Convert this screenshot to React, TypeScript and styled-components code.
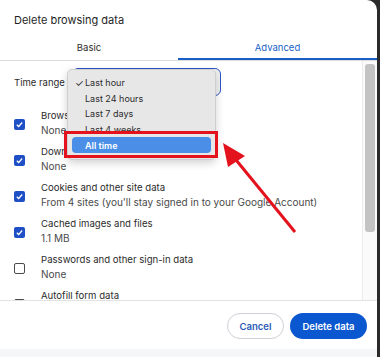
import React from 'react'
import styled, { createGlobalStyle } from 'styled-components'

const GlobalStyle = createGlobalStyle`
  html, body {
    margin: 0;
    padding: 0;
    background: #2a2a2a;
    font-family: Inter, "Noto Sans", sans-serif;
  }
`

const Page = styled.div`
  width: 380px;
  height: 357px;
  overflow: hidden;
  position: relative;
`

const Dialog = styled.div`
  width: 377px;
  height: 357px;
  background: #fff;
  border-top-right-radius: 10px;
  display: flex;
  flex-direction: column;
`

const Title = styled.div`
  padding: 12px 14px 0;
  height: 24px;
  font-size: 11px;
  color: #1f1f1f;
  line-height: 16px;
`

const Tabs = styled.div`
  display: flex;
  height: 24px;
  border-bottom: 1px solid #dcdcdc;
`

const Tab = styled.div<{ $active?: boolean; $width?: number }>`
  ${(p) => (p.$width ? `width: ${p.$width}px;` : 'flex: 1;')}
  display: flex;
  align-items: center;
  justify-content: center;
  padding-bottom: 2px;
  font-size: 9.5px;
  color: ${(p) => (p.$active ? '#1a5fc8' : '#2b2b2b')};
  box-shadow: ${(p) => (p.$active ? 'inset 0 -2px 0 #1a5fc8' : 'none')};
`

const Body = styled.div`
  height: 239px;
  display: flex;
  overflow: hidden;
`

const Content = styled.div`
  flex: 1;
  padding: 7px 14px 0;
  display: flex;
  flex-direction: column;
`

const RangeRow = styled.div`
  display: flex;
  align-items: center;
  height: 28px;
  margin-bottom: 12px;
`

const Label = styled.span`
  font-size: 9.5px;
  color: #2b2b2b;
  width: 58px;
`

const SelectBox = styled.div`
  width: 147px;
  height: 26px;
  border: 1.5px solid #2f55c8;
  border-radius: 6px;
  background: #f1f1f1;
`

const Rows = styled.div`
  display: flex;
  flex-direction: column;
  gap: 6px;
`

const Row = styled.div`
  display: flex;
  align-items: center;
  height: 30px;
`

const Check = styled.div<{ $on?: boolean }>`
  width: 11px;
  height: 11px;
  box-sizing: border-box;
  border-radius: 2px;
  margin-top: 2px;
  margin-right: 16px;
  background: ${(p) => (p.$on ? '#1f4fc4' : '#fff')};
  border: ${(p) => (p.$on ? 'none' : '1.5px solid #4a4a4a')};
  display: flex;
  align-items: center;
  justify-content: center;
`

const RowText = styled.div`
  display: flex;
  flex-direction: column;
`

const RowTitle = styled.span`
  font-size: 9.6px;
  line-height: 15px;
  color: #2b2b2b;
`

const RowSub = styled.span`
  font-size: 10px;
  line-height: 15px;
  color: #4a4a4a;
`

const ScrollTrack = styled.div`
  width: 10px;
  border-left: 1px solid #ececec;
  background: #fafafa;
  padding: 3px 2px 0;
`

const ScrollThumb = styled.div`
  height: 168px;
  border-radius: 3px;
  background: #c3c3c3;
`

const Footer = styled.div`
  border-top: 1px solid #e2e2e2;
  height: 49px;
  display: flex;
  justify-content: flex-end;
  align-items: flex-start;
  padding: 12px 10px 0 0;
  gap: 6px;
  box-sizing: border-box;
`

const Button = styled.button<{ $primary?: boolean }>`
  height: 26px;
  border-radius: 13px;
  width: ${(p) => (p.$primary ? '77px' : '57px')};
  padding: 0;
  font-family: inherit;
  font-size: 9.5px;
  font-weight: 600;
  border: ${(p) => (p.$primary ? 'none' : '1px solid #cdd0d6')};
  background: ${(p) => (p.$primary ? '#0b57d0' : '#fff')};
  color: ${(p) => (p.$primary ? '#fff' : '#2a5bb8')};
`

const BottomStrip = styled.div`
  flex: 1;
  background: #f5f6f7;
`

const Menu = styled.div`
  position: absolute;
  left: 67px;
  top: 69px;
  width: 149px;
  height: 91px;
  box-sizing: border-box;
  background: #e7e7e7;
  border: 1px solid #cfcfcf;
  border-radius: 5px;
  box-shadow: 0 3px 8px rgba(0, 0, 0, 0.18);
  padding: 5px 4px;
  display: flex;
  flex-direction: column;
`

const MenuItem = styled.div<{ $hl?: boolean }>`
  height: ${(p) => (p.$hl ? '16px' : '15.5px')};
  display: flex;
  align-items: center;
  padding-left: 13px;
  font-size: 9px;
  border-radius: 4px;
  position: relative;
  color: ${(p) => (p.$hl ? '#fff' : '#2b2b2b')};
  background: ${(p) => (p.$hl ? '#4a8ee8' : 'transparent')};
  font-weight: ${(p) => (p.$hl ? 600 : 400)};
`

const Tick = styled.span`
  position: absolute;
  left: 3px;
  font-size: 10px;
`

const Highlight = styled.div`
  position: absolute;
  left: 64px;
  top: 131px;
  width: 154px;
  height: 27px;
  box-sizing: border-box;
  border: 3px solid #e3121c;
`

const Arrow = styled.svg`
  position: absolute;
  left: 0;
  top: 0;
  pointer-events: none;
`

const CheckMark = () => (
  <svg width="9" height="9" viewBox="0 0 10 10">
    <path d="M2 5.2 L4.1 7.2 L8 2.8" fill="none" stroke="#fff" strokeWidth="1.4" />
  </svg>
)

const items = [
  { title: 'Browsing history', sub: 'None', on: true },
  { title: 'Download history', sub: 'None', on: true },
  { title: 'Cookies and other site data', sub: "From 4 sites (you'll stay signed in to your Google Account)", on: true },
  { title: 'Cached images and files', sub: '1.1 MB', on: true },
  { title: 'Passwords and other sign-in data', sub: 'None', on: false },
  { title: 'Autofill form data', sub: 'None', on: false }
]

const App = () => {
  return (
    <Page>
      <GlobalStyle />
      <Dialog>
        <Title>Delete browsing data</Title>
        <Tabs>
          <Tab $width={178}>Basic</Tab>
          <Tab $active>Advanced</Tab>
        </Tabs>
        <Body>
          <Content>
            <RangeRow>
              <Label>Time range</Label>
              <SelectBox />
            </RangeRow>
            <Rows>
              {items.map((it) => (
                <Row key={it.title}>
                  <Check $on={it.on}>{it.on && <CheckMark />}</Check>
                  <RowText>
                    <RowTitle>{it.title}</RowTitle>
                    <RowSub>{it.sub}</RowSub>
                  </RowText>
                </Row>
              ))}
            </Rows>
          </Content>
          <ScrollTrack>
            <ScrollThumb />
          </ScrollTrack>
        </Body>
        <Footer>
          <Button>Cancel</Button>
          <Button $primary>Delete data</Button>
        </Footer>
        <BottomStrip />
      </Dialog>
      <Menu>
        <MenuItem>
          <Tick>✓</Tick>Last hour
        </MenuItem>
        <MenuItem>Last 24 hours</MenuItem>
        <MenuItem>Last 7 days</MenuItem>
        <MenuItem>Last 4 weeks</MenuItem>
        <MenuItem $hl>All time</MenuItem>
      </Menu>
      <Highlight />
      <Arrow width="380" height="357">
        <line x1="295" y1="232" x2="232" y2="155" stroke="#e3121c" strokeWidth="3" />
        <polygon points="223,143 228,167 245,156" fill="#e3121c" />
      </Arrow>
    </Page>
  )
}

export default App
